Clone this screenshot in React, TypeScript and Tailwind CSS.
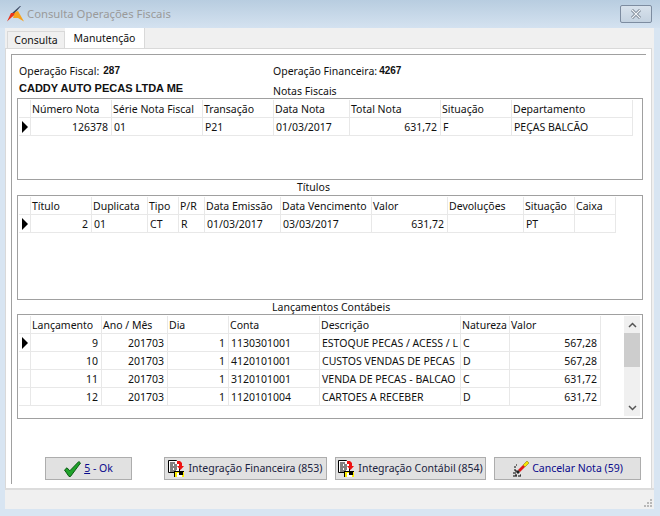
import type { ReactNode } from 'react'

type Col = { label: string; align?: 'right' }

const notasCols: Col[] = [
  { label: 'Número Nota', align: 'right' },
  { label: 'Série Nota Fiscal' },
  { label: 'Transação' },
  { label: 'Data Nota' },
  { label: 'Total Nota', align: 'right' },
  { label: 'Situação' },
  { label: 'Departamento' },
]
const notasRows = [['126378', '01', 'P21', '01/03/2017', '631,72', 'F', 'PEÇAS BALCÃO']]

const titulosCols: Col[] = [
  { label: 'Título', align: 'right' },
  { label: 'Duplicata' },
  { label: 'Tipo' },
  { label: 'P/R' },
  { label: 'Data Emissão' },
  { label: 'Data Vencimento' },
  { label: 'Valor', align: 'right' },
  { label: 'Devoluções' },
  { label: 'Situação' },
  { label: 'Caixa' },
]
const titulosRows = [['2', '01', 'CT', 'R', '01/03/2017', '03/03/2017', '631,72', '', 'PT', '']]

const lancCols: Col[] = [
  { label: 'Lançamento', align: 'right' },
  { label: 'Ano / Mês', align: 'right' },
  { label: 'Dia', align: 'right' },
  { label: 'Conta' },
  { label: 'Descrição' },
  { label: 'Natureza' },
  { label: 'Valor', align: 'right' },
]
const lancRows = [
  ['9', '201703', '1', '1130301001', 'ESTOQUE PECAS / ACESS / L', 'C', '567,28'],
  ['10', '201703', '1', '4120101001', 'CUSTOS VENDAS DE PECAS', 'D', '567,28'],
  ['11', '201703', '1', '3120101001', 'VENDA DE PECAS - BALCAO', 'C', '631,72'],
  ['12', '201703', '1', '1120101004', 'CARTOES A RECEBER', 'D', '631,72'],
]

function Arrow() {
  return (
    <svg width="12" height="18" viewBox="0 0 12 18">
      <polygon points="3,3 3,15 9,9" fill="#000" />
      <polygon points="4,15 10,9 10,10 4,16" fill="#fff" />
    </svg>
  )
}

function DataGrid({ cols, rows, template }: { cols: Col[]; rows: string[][]; template: string }) {
  return (
    <div className={`grid w-fit auto-rows-[18px] ${template}`}>
      <div className="border-r border-b border-[#e8e8e8]" />
      {cols.map((c) => (
        <div
          key={c.label}
          className="overflow-hidden whitespace-nowrap border-r border-b border-[#e8e8e8] pl-[1px] leading-[18px]"
        >
          {c.label}
        </div>
      ))}
      {rows.map((row, i) => (
        <RowCells key={i} first={i === 0} row={row} cols={cols} />
      ))}
    </div>
  )
}

function RowCells({ first, row, cols }: { first: boolean; row: string[]; cols: Col[] }) {
  return (
    <>
      <div className="border-r border-b border-[#e8e8e8]">{first && <Arrow />}</div>
      {row.map((v, j) => (
        <div
          key={j}
          className={
            cols[j].align === 'right'
              ? 'overflow-hidden whitespace-nowrap border-r border-b border-[#e8e8e8] pr-[3px] text-right leading-[18px]'
              : 'overflow-hidden whitespace-nowrap border-r border-b border-[#e8e8e8] pl-[2px] leading-[18px]'
          }
        >
          {v}
        </div>
      ))}
    </>
  )
}

function DocIcon() {
  return (
    <svg width="17" height="17" viewBox="0 0 17 17" className="shrink-0">
      <path d="M0.500 0.500h8l3 3v9h-11z" fill="#fff" stroke="#000" />
      <path d="M2 3h5M2 5h3M6 5h3M2 7h7M2 9h3M6 9h3M2 11h6" stroke="#000" />
      <path d="M6 11h10v6H6z" fill="#000" />
      <path d="M7 12h9v5H7z" fill="#ffee00" />
      <path d="M9 13h5v4H9z" fill="#fff" />
      <path d="M11 12h4v3h-4z" fill="#000" />
      <path d="M9 1h3l2 2v3h2l-3.500 4L9 6h2V4H9z" fill="#ee1111" />
    </svg>
  )
}

function CheckIcon() {
  return (
    <svg width="17" height="16" viewBox="0 0 17 16" className="shrink-0">
      <path
        d="M0.500 9l2.500-2.200 2.800 3L14.800 0.500l1.700 1.500L6.500 15.500H5z"
        fill="#1fa32a"
        stroke="#0b5a14"
        strokeWidth="1"
      />
    </svg>
  )
}

function EraserIcon() {
  return (
    <svg width="17" height="18" viewBox="0 0 17 18" className="shrink-0">
      <path d="M11 5l4-4 2 2-4 4z" fill="#f5e400" stroke="#7a6c00" strokeWidth="0.500" />
      <path d="M6 10l5-5 2 2-5 5z" fill="#e01818" />
      <path d="M4 12l2-2 2 2-2 2z" fill="#222" />
      <path d="M2 7h2M4 5h1M1 13h3M1 16h4M6 16h3M3 15h2M8 15h1M2 10h2M3 11h2" stroke="#000" />
    </svg>
  )
}

function ActionButton({ icon, width, dark, children }: { icon: ReactNode; width: string; dark?: boolean; children: ReactNode }) {
  return (
    <button
      className={`flex h-[23px] items-center justify-center gap-[3px] whitespace-nowrap border border-[#adadad] bg-[#e1e1e1] ${width} ${
        dark ? 'text-[#1a2340]' : 'text-[#0a0a8c]'
      }`}
    >
      {icon}
      <span className="pt-[1px]">{children}</span>
    </button>
  )
}

export default function App() {
  return (
    <div className="flex h-[516px] w-[660px] flex-col overflow-hidden bg-[#d8e5f2] font-['Noto_Sans',sans-serif] text-[10.5px] text-[#111]">
      {/* title bar */}
      <div className="flex h-[28px] shrink-0 items-center bg-gradient-to-b from-[#b8cde0] to-[#d4e2f0] pl-[7px] pr-[8px]">
        <svg width="17" height="17" viewBox="0 0 17 17" className="shrink-0">
          <path d="M13 0 L14 0 L7 8 L4 8z" fill="#3a4660" />
          <path d="M0 15.500 L4 7 L10 7 L5 11z" fill="#e8351c" />
          <path d="M8 6 L11 5 L17 15.500 L11 12 L6 12z" fill="#f5a21e" />
        </svg>
        <span className="ml-[3px] text-[11.300px] text-[#9a9a9a]">Consulta Operações Fiscais</span>
        <div className="ml-auto flex h-[18px] w-[32px] items-center justify-center rounded-[2px] border border-[#7d8ca0] bg-gradient-to-b from-[#d8e2ec] to-[#c4d2e0]">
          <svg width="12" height="10" viewBox="0 0 12 10">
            <path d="M2 1l8 8M10 1l-8 8" stroke="#5c6878" strokeWidth="2.600" fill="none" />
            <path d="M2 1l8 8M10 1l-8 8" stroke="#f2f5f8" strokeWidth="1.400" fill="none" />
          </svg>
        </div>
      </div>

      {/* client area */}
      <div className="ml-[5px] mr-[6px] flex h-[481px] shrink-0 flex-col bg-[#f0f0f0]">
        {/* tabs */}
        <div className="flex h-[20px] shrink-0 items-end pl-[2px]">
          <div className="flex h-[17px] w-[58px] items-center justify-center border border-b-0 border-[#d9d9d9] bg-[#f0f0f0] pt-[1px]">
            Consulta
          </div>
          <div className="flex h-[20px] w-[80px] items-start justify-center border-r border-[#d9d9d9] bg-white pt-[3px]">
            Manutenção
          </div>
        </div>

        {/* tab page */}
        <div className="mr-[2px] flex h-[440px] shrink-0 flex-col border-x border-t border-[#d9d9d9] bg-white pl-[5px] pt-[5px]">
          <div className="mr-[5px] h-[430px] border-l border-t border-[#a0a0a0] pl-[5px]">
            <div className="flex h-[24px] items-end pl-[2px] leading-[16px]">
              <div className="flex w-[254px] items-center gap-[4px]">
                Operação Fiscal:
                <b className="font-['Liberation_Sans',sans-serif] text-[10px]">287</b>
              </div>
              <div className="flex items-center gap-[2px]">
                Operação Financeira:
                <b className="font-['Liberation_Sans',sans-serif] text-[10px]">4267</b>
              </div>
            </div>
            <div className="flex h-[19px] items-start pl-[2px]">
              <b className="w-[254px] pt-[1px] font-['Liberation_Sans',sans-serif] text-[11px]">CADDY AUTO PECAS LTDA ME</b>
              <span className="pt-[5px] leading-[14px]">Notas Fiscais</span>
            </div>

            <div className="h-[82px] w-[626px] border border-[#a0a0a0] p-[1px]">
              <DataGrid
                cols={notasCols}
                rows={notasRows}
                template="grid-cols-[12px_81px_91px_71px_76px_91px_71px_121px]"
              />
            </div>

            <div className="h-[15px] pl-[280px] leading-[14px]">Títulos</div>

            <div className="h-[105px] w-[626px] border border-[#a0a0a0] p-[1px]">
              <DataGrid
                cols={titulosCols}
                rows={titulosRows}
                template="grid-cols-[12px_61px_56px_31px_26px_76px_91px_76px_76px_51px_41px]"
              />
            </div>

            <div className="h-[14px] pl-[255px] leading-[14px]">Lançamentos Contábeis</div>

            <div className="flex h-[105px] w-[626px] border border-[#a0a0a0] p-[1px]">
              <DataGrid
                cols={lancCols}
                rows={lancRows}
                template="grid-cols-[12px_71px_66px_61px_91px_141px_49px_91px]"
              />
              <div className="ml-[23px] flex h-[100px] w-[16px] flex-col items-center bg-[#f0f0f0]">
                <div className="flex h-[17px] w-full items-center justify-center">
                  <svg width="9" height="6" viewBox="0 0 9 6">
                    <path d="M1 5l3.500-3.500L8 5" stroke="#555" strokeWidth="1.500" fill="none" />
                  </svg>
                </div>
                <div className="h-[34px] w-full bg-[#cdcdcd]" />
                <div className="mt-auto flex h-[17px] w-full items-center justify-center">
                  <svg width="9" height="6" viewBox="0 0 9 6">
                    <path d="M1 1l3.500 3.500L8 1" stroke="#555" strokeWidth="1.500" fill="none" />
                  </svg>
                </div>
              </div>
            </div>

            <div className="ml-[28px] mt-[38px] flex gap-[8px]">
              <div className="mr-[24px]">
                <ActionButton icon={<CheckIcon />} width="w-[87px]">
                  <u>5</u> - Ok
                </ActionButton>
              </div>
              <ActionButton icon={<DocIcon />} width="w-[163px]" dark>
                Integração Financeira (853)
              </ActionButton>
              <ActionButton icon={<DocIcon />} width="w-[151px]" dark>
                Integração Contábil (854)
              </ActionButton>
              <ActionButton icon={<EraserIcon />} width="w-[147px]">
                Cancelar Nota (59)
              </ActionButton>
            </div>
          </div>
        </div>

        {/* status bar */}
        <div className="relative flex-1 border-t-2 border-[#dcdcdc]">
          <svg width="10" height="10" viewBox="0 0 10 10" className="absolute bottom-[1px] right-[1px]">
            <path
              d="M7 1h2v2H7zM4 4h2v2H4zM7 4h2v2H7zM1 7h2v2H1zM4 7h2v2H4zM7 7h2v2H7z"
              fill="#b8b8b8"
            />
          </svg>
        </div>
      </div>
    </div>
  )
}
